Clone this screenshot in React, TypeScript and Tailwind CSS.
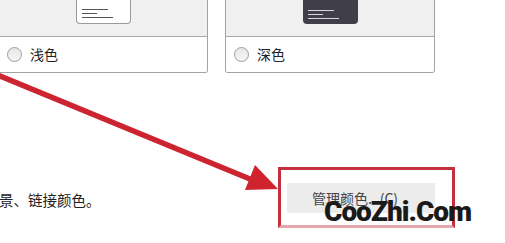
import React from "react";

function Thumb({ dark }: { dark?: boolean }) {
  const line = dark ? "bg-[#d8d8dc]" : "bg-[#555]";
  return (
    <div
      className={
        "w-[55px] h-[40px] rounded-b-[4px] flex flex-col justify-end gap-[3px] pl-[5px] pb-[5px] " +
        (dark ? "bg-[#403e48]" : "bg-white border border-[#9a9a9a] border-t-0 pl-[4px]")
      }
    >
      <div className={"h-px w-[26px] " + line} />
      <div className={"h-px w-[15px] " + line} />
      <div className={"h-px w-[31px] " + line} />
    </div>
  );
}

function Card({ label, dark }: { label: string; dark?: boolean }) {
  return (
    <div className="w-[210px] h-[73px] border border-[#a3a3a3] border-t-0 rounded-b-[3px] flex flex-col overflow-hidden shrink-0">
      <div className="h-[37px] bg-[#f0f0f0] border-b border-[#a8a8a8] flex items-end justify-center pb-[12px] overflow-hidden">
        <Thumb dark={dark} />
      </div>
      <div className="flex-1 bg-white flex items-center pl-[8px] gap-[8px]">
        <div className="w-[15px] h-[15px] rounded-full border border-[#9c9c9c] bg-gradient-to-b from-[#e6e6e6] to-[#f6f6f6]" />
        <span className="text-[14px] text-[#222]">{label}</span>
      </div>
    </div>
  );
}

export default function App() {
  return (
    <div
      className="relative w-[505px] h-[243px] bg-white overflow-hidden"
      style={{ fontFamily: '"Noto Sans CJK SC", "Microsoft YaHei", sans-serif' }}
    >
      <div className="flex gap-[17px] ml-[-2px]">
        <Card label="浅色" />
        <Card label="深色" dark />
      </div>

      <div className="flex items-center mt-[110px] pr-[70px]">
        <span className="text-[14.5px] text-[#222] mt-[4px] leading-none ml-[-1px]">景、链接颜色。</span>
        <div className="ml-auto w-[148px] h-[30px] bg-[#ececec] flex items-center pl-[25px]">
          <span className="text-[14px] text-[#444] leading-none">管理颜色...(C)</span>
        </div>
      </div>

      {/* annotation overlays */}
      <svg className="absolute inset-0 pointer-events-none" width="505" height="243">
        <line x1="-5" y1="74" x2="256" y2="181.5" stroke="#cc2430" strokeWidth="5.5" />
        <polygon points="278,189 245,190 255,165" fill="#d0232e" />
      </svg>
      <div className="absolute left-[278px] top-[167px] w-[177px] h-[61px] border-[3px] border-[#c42f3d] border-b-[#e3a8ae] pointer-events-none" />
      <div
        className="absolute left-[324px] top-[198px] text-[28px] leading-none text-[#1a1a1a] tracking-[-1px]"
        style={{ fontFamily: 'Roboto, "Liberation Sans", Arial, sans-serif', fontWeight: 900 }}
      >
        CooZhi.Com
      </div>
    </div>
  );
}
